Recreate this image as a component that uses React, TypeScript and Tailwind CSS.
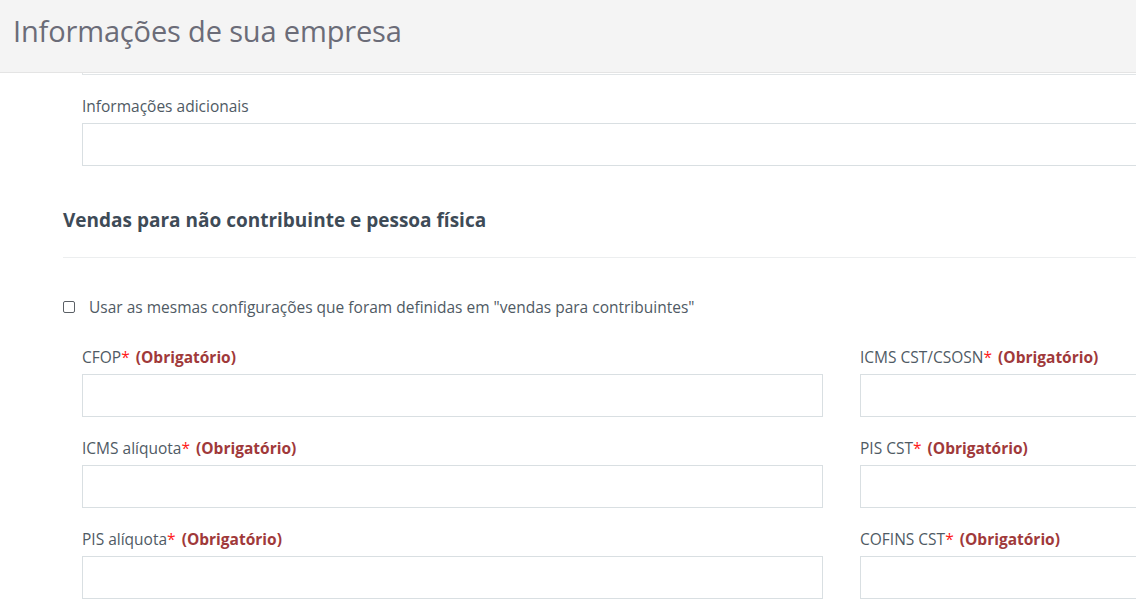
import React from 'react';

type Field = { label: string };

const left: Field[] = [{ label: 'CFOP' }, { label: 'ICMS alíquota' }, { label: 'PIS alíquota' }];
const right: Field[] = [{ label: 'ICMS CST/CSOSN' }, { label: 'PIS CST' }, { label: 'COFINS CST' }];

function RequiredLabel({ label }: Field) {
  return (
    <label className="block text-[15.5px] leading-[18px] text-[#4f5a64] mb-[8px] whitespace-nowrap">
      {label}
      <span className="text-[#ff1a1a]">*</span>{' '}
      <span className="ml-[2px] font-bold text-[#a0393a]">(Obrigatório)</span>
    </label>
  );
}

function Input() {
  return <div className="h-[43px] w-full border border-[#d9dfe2] bg-white" />;
}

export default function App() {
  const rows = left.map((l, i) => [l, right[i]]);

  return (
    <div className="w-[1136px] h-[614px] overflow-hidden bg-white font-['Open_Sans',sans-serif]">
      <header className="h-[73px] bg-[#f4f4f4] border-b border-[#e4e4e4] pl-[13px] pt-[13px]">
        <h1 className="text-[29px] leading-[36px] text-[#6b6c78] tracking-[-0.15px] whitespace-nowrap">Informações de sua empresa</h1>
      </header>

      <div className="pl-[82px]">
        <div className="w-[1200px] h-[2px] border-x border-b border-[#e1e5e7]" />
      </div>

      <div className="pl-[82px] pt-[22px]">
        <label className="block text-[15.5px] leading-[18px] text-[#4f5a64] mb-[8px]">Informações adicionais</label>
        <div className="w-[1200px] h-[43px] border border-[#d9dfe2]" />
      </div>

      <section className="pl-[63px] pt-[42px]">
        <h2 className="text-[19px] leading-[24px] font-bold text-[#3e4b57]">Vendas para não contribuinte e pessoa física</h2>
        <div className="mt-[25px] w-[1200px] border-t border-[#eceeef]" />

        <div className="mt-[40px] flex items-center gap-[14px]">
          <span className="w-[12px] h-[12px] rounded-[2px] border border-[#5b6066] bg-white" />
          <span className="text-[15.5px] leading-[18px] text-[#4f5a64] whitespace-nowrap">
            Usar as mesmas configurações que foram definidas em "vendas para contribuintes"
          </span>
        </div>

        <div className="pl-[19px] pt-[32px] grid grid-cols-[741px_741px] gap-x-[37px] gap-y-[22px]">
          {rows.map(([l, r]) => (
            <React.Fragment key={l.label}>
              <div>
                <RequiredLabel label={l.label} />
                <Input />
              </div>
              <div>
                <RequiredLabel label={r.label} />
                <Input />
              </div>
            </React.Fragment>
          ))}
        </div>
      </section>
    </div>
  );
}
